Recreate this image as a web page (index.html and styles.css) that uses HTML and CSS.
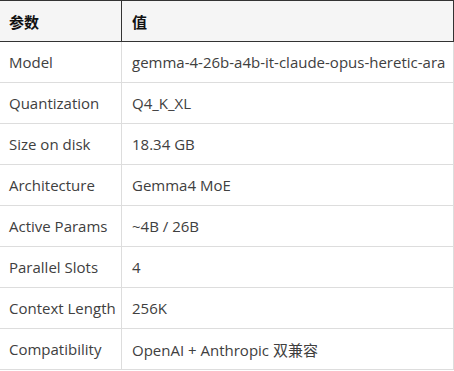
FILE: index.html
```html
<!DOCTYPE html>
<html lang="zh">
<head>
<meta charset="utf-8">
<link rel="stylesheet" href="styles.css">
</head>
<body>
<table class="spec">
  <colgroup><col class="c1"><col class="c2"></colgroup>
  <thead>
    <tr><th>参数</th><th>值</th></tr>
  </thead>
  <tbody>
    <tr><td>Model</td><td>gemma-4-26b-a4b-it-claude-opus-heretic-ara</td></tr>
    <tr><td>Quantization</td><td>Q4_K_XL</td></tr>
    <tr><td>Size on disk</td><td>18.34 GB</td></tr>
    <tr><td>Architecture</td><td>Gemma4 MoE</td></tr>
    <tr><td>Active Params</td><td>~4B / 26B</td></tr>
    <tr><td>Parallel Slots</td><td>4</td></tr>
    <tr><td>Context Length</td><td>256K</td></tr>
    <tr><td>Compatibility</td><td>OpenAI + Anthropic 双兼容</td></tr>
  </tbody>
</table>
</body>
</html>
```

FILE: styles.css
```css
html, body {
  margin: 0;
  padding: 0;
  background: #ffffff;
}
body {
  font-family: "Open Sans", "Noto Sans CJK SC", sans-serif;
  font-size: 15px;
  color: #404040;
}
.spec {
  margin-left: -1px;
  width: 455px;
  table-layout: fixed;
  border-collapse: separate;
  border-spacing: 0;
  border-left: 1px solid #dddddd;
}
.c1 { width: 122px; }
.spec th, .spec td {
  padding: 0 9px;
  text-align: left;
  vertical-align: middle;
  white-space: nowrap;
  box-sizing: border-box;
}
.spec th {
  background: #f5f5f5;
  color: #111111;
  font-size: 15px;
  font-weight: bold;
  border-top: 1px solid #333333;
  border-bottom: 1px solid #333333;
  border-right: 1px solid #333333;
  height: 42px;
}
.spec td {
  border-bottom: 1px solid #dddddd;
  border-right: 1px solid #dddddd;
  height: 41px;
}
.spec td + td, .spec th + th {
  padding-left: 10px;
}
```
